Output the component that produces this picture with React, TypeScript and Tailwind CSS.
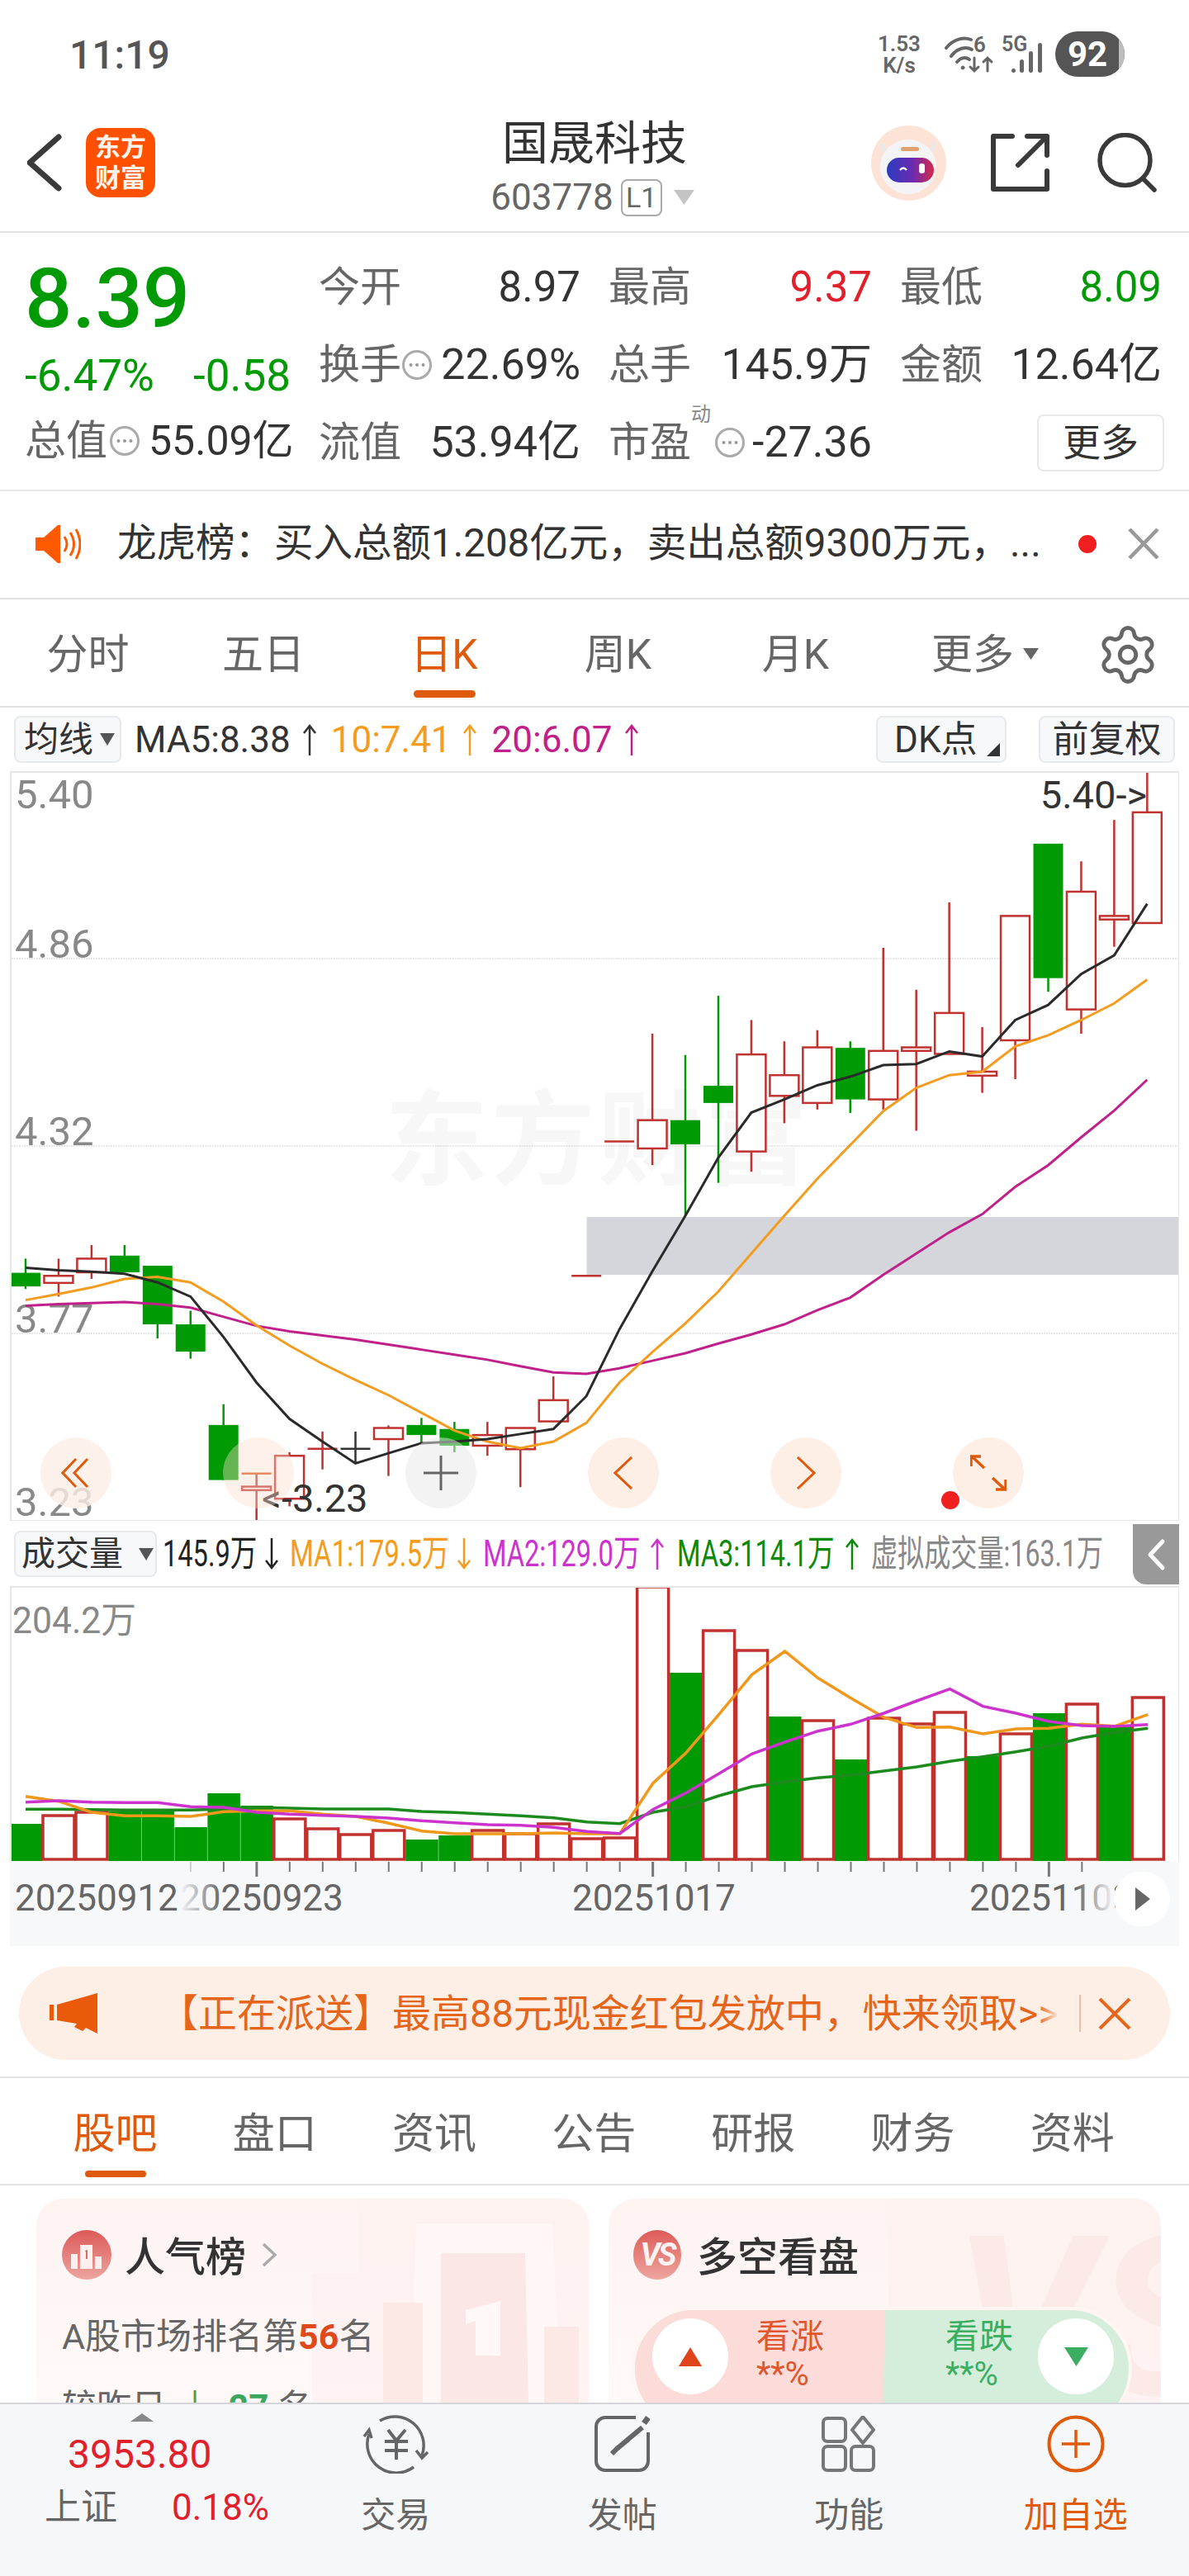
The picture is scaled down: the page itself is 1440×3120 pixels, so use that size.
import { Settings } from "lucide-react";

const RED = "#c0322f";
const GREEN = "#009a05";
const cx = (i: number) => 31 + 39.98 * i;
const ky = (z: number) => 900 + z * 0.6122;
const vy = (z: number) => 1860 + z / 3;

// [kind, wickTop, bodyTop, bodyBottom, wickBottom] in chart zoom units
type Candle = ["r" | "g" | "k", number, number, number, number];
const candles: Candle[] = [
  ["g", 1020, 1048, 1075, 1080],
  ["r", 1020, 1054, 1068, 1095],
  ["r", 993, 1020, 1047, 1060],
  ["g", 993, 1014, 1047, 1047],
  ["g", 1034, 1034, 1150, 1178],
  ["g", 1123, 1150, 1204, 1218],
  ["g", 1308, 1349, 1458, 1458],
  ["r", 1445, 1471, 1478, 1540],
  ["r", 1403, 1410, 1495, 1510],
  ["r", 1362, 1396, 1396, 1437],
  ["k", 1362, 1396, 1396, 1425],
  ["r", 1350, 1355, 1377, 1450],
  ["g", 1335, 1349, 1369, 1385],
  ["g", 1343, 1357, 1390, 1403],
  ["r", 1343, 1369, 1390, 1410],
  ["r", 1355, 1355, 1397, 1472],
  ["r", 1253, 1300, 1342, 1342],
  ["r", 1054, 1054, 1054, 1054],
  ["r", 788, 788, 788, 788],
  ["r", 575, 746, 802, 835],
  ["g", 617, 746, 794, 935],
  ["g", 500, 678, 712, 870],
  ["r", 548, 616, 808, 848],
  ["r", 590, 657, 698, 752],
  ["r", 568, 602, 712, 725],
  ["g", 590, 603, 705, 732],
  ["r", 405, 609, 705, 725],
  ["r", 488, 602, 609, 767],
  ["r", 315, 534, 615, 615],
  ["r", 562, 650, 658, 692],
  ["r", 342, 342, 588, 665],
  ["g", 199, 199, 465, 492],
  ["r", 234, 294, 527, 575],
  ["r", 152, 342, 349, 403],
  ["r", 56, 137, 356, 356],
];

const ma5 = [1038, 1043, 1046, 1050, 1067, 1095, 1175, 1265, 1337, 1382, 1425, 1405, 1385, 1382, 1377, 1367, 1357, 1292, 1160, 1045, 935, 820, 731, 705, 677, 660, 637, 635, 610, 620, 548, 518, 457, 420, 318];
const ma10 = [1102, 1090, 1077, 1060, 1056, 1067, 1105, 1152, 1192, 1228, 1260, 1290, 1325, 1360, 1382, 1395, 1382, 1345, 1265, 1205, 1148, 1085, 1010, 935, 862, 795, 728, 682, 657, 650, 600, 578, 548, 515, 468];
const ma20 = [1113, 1110, 1108, 1106, 1110, 1117, 1135, 1153, 1164, 1172, 1180, 1190, 1200, 1210, 1220, 1233, 1245, 1248, 1237, 1222, 1207, 1188, 1170, 1150, 1122, 1097, 1052, 1010, 968, 932, 878, 835, 780, 727, 666];

const volBars: ["r" | "g", number][] = [
  ["g", 2209], ["r", 2199], ["r", 2195], ["g", 2194], ["g", 2191], ["g", 2213], ["g", 2172], ["g", 2187], ["r", 2203],
  ["r", 2215], ["r", 2222], ["r", 2217], ["g", 2228], ["g", 2223], ["r", 2217], ["r", 2221], ["r", 2209], ["r", 2227],
  ["r", 2226], ["r", 1922], ["g", 2026], ["r", 1975], ["r", 1999], ["g", 2079], ["r", 2084], ["g", 2131], ["r", 2081],
  ["r", 2088], ["r", 2074], ["g", 2127], ["r", 2100], ["g", 2075], ["r", 2064], ["g", 2089], ["r", 2056],
];
const vol1 = [947, 965, 1005, 1018, 1018, 1020, 1003, 1000, 1000, 1012, 1020, 1045, 1073, 1083, 1083, 1083, 1080, 1083, 1083, 900, 790, 650, 505, 420, 517, 590, 660, 697, 695, 720, 702, 700, 685, 692, 650];
const vol2 = [968, 963, 968, 970, 970, 985, 987, 1005, 1012, 1016, 1020, 1026, 1036, 1043, 1050, 1052, 1060, 1075, 1082, 995, 935, 865, 793, 750, 710, 685, 645, 600, 557, 620, 645, 675, 690, 693, 686];
const vol3 = [994, 994, 995, 997, 997, 997, 993, 987, 990, 993, 993, 993, 1002, 1006, 1012, 1018, 1025, 1040, 1046, 1005, 985, 945, 912, 895, 880, 870, 855, 840, 820, 803, 785, 765, 735, 715, 700];

const pts = (vals: number[], f: (z: number) => number) => vals.map((z, i) => `${cx(i)},${f(z)}`).join(" ");

function StatusBar() {
  return (
    <div className="flex h-[131px] shrink-0 items-center justify-between pl-[84px] pr-[78px]">
      <span className="pt-[2px] text-[48px] font-medium leading-none text-[#555]">11:19</span>
      <div className="flex items-center">
        <div className="flex w-[60px] flex-col items-center text-[26px] font-semibold leading-[26px] text-[#666]">
          <span>1.53</span>
          <span>K/s</span>
        </div>
        <svg width="60" height="56" viewBox="0 0 60 56" className="ml-[25px]" fill="none" stroke="#666" strokeLinecap="round">
          <path d="M2 20 C 12 8, 24 7, 32 10" strokeWidth="4" />
          <path d="M8 30 C 15 20, 26 18, 33 22" strokeWidth="4" />
          <path d="M15 37 C 20 31, 26 31, 30 34" strokeWidth="4" />
          <circle cx="22" cy="44" r="2" fill="#666" strokeWidth="1" />
          <text x="35" y="25" fill="#666" stroke="none" fontSize="26" fontWeight="600">6</text>
          <path d="M36 32 V48 M31 43 L36 48 L41 43 M52 48 V32 M47 37 L52 32 L57 37" strokeWidth="3" />
        </svg>
        <svg width="54" height="48" viewBox="0 0 54 48" className="ml-[9px]" fill="#666">
          <text x="0" y="20" fontSize="25" fontWeight="600">5G</text>
          <rect x="12" y="41" width="5" height="5" rx="2.5" />
          <rect x="22" y="30" width="5" height="16" rx="2.5" />
          <rect x="33" y="20" width="5" height="26" rx="2.5" />
          <rect x="44" y="10" width="5" height="36" rx="2.5" />
        </svg>
        <div className="relative ml-[11px] flex h-[55px] w-[84px] items-center justify-center overflow-hidden rounded-full bg-[#555]">
          <span className="pr-[6px] text-[42px] font-bold leading-none text-white">92</span>
          <div className="absolute bottom-0 right-0 top-0 w-[7px] bg-[#bdbdbd]" />
        </div>
      </div>
    </div>
  );
}

function Avatar() {
  return (
    <svg width="93" height="91" viewBox="0 0 93 91" className="mt-[21px]">
      <defs>
        <linearGradient id="visor" x1="0" x2="1">
          <stop offset="0" stopColor="#2a3cc0" />
          <stop offset="0.55" stopColor="#6a2bb0" />
          <stop offset="1" stopColor="#d8284a" />
        </linearGradient>
      </defs>
      <circle cx="46.5" cy="45.5" r="45.5" fill="#fde3d6" />
      <path d="M14 22 q2 10 10 12 M78 20 q-2 10 -10 14" stroke="#e8e8e8" strokeWidth="5" fill="none" />
      <ellipse cx="46" cy="50" rx="34" ry="33" fill="#f4f4f6" />
      <rect x="37" y="26" width="22" height="5" rx="2.5" fill="#e0a070" />
      <rect x="20" y="39" width="57" height="30" rx="15" fill="url(#visor)" />
      <path d="M36 54 q4 -5 8 0" stroke="#fff" strokeWidth="2.5" fill="none" />
      <rect x="59" y="46" width="7" height="12" rx="3" fill="#fff" />
    </svg>
  );
}

function Header() {
  return (
    <div className="grid h-[151px] shrink-0 grid-cols-3 border-b-2 border-[#e2e2e2]">
      <div className="flex items-start pl-[33px]">
        <svg width="42" height="70" viewBox="0 0 42 70" fill="none" stroke="#3a3a3a" strokeWidth="7" strokeLinecap="round" strokeLinejoin="round" className="mt-[31px]">
          <path d="M38 4 L3 35 L38 66" />
        </svg>
        <div className="ml-[29px] mt-[24px] flex h-[84px] w-[84px] flex-col items-center justify-center rounded-[18px] bg-[#ff5000] text-[31px] font-bold leading-[37px] text-[#fff3ea]">
          <span>东方</span>
          <span>财富</span>
        </div>
      </div>
      <div className="flex flex-col items-center pt-[15px]">
        <span className="text-[56px] leading-[56px] text-[#333]">国晟科技</span>
        <div className="mr-[5px] mt-[13px] flex items-center text-[44px] leading-[48px] text-[#666]">
          <span>603778</span>
          <span className="ml-[9px] flex h-[45px] w-[50px] items-center justify-center rounded-[8px] border-2 border-[#aaa] text-[34px] leading-none">L1</span>
          <svg width="25" height="18" viewBox="0 0 25 18" className="ml-[14px]" fill="#c4c4c4">
            <path d="M0 0 H25 L12.5 18 Z" />
          </svg>
        </div>
      </div>
      <div className="flex items-start justify-end pr-[39px]">
        <Avatar />
        <svg width="71" height="70" viewBox="0 0 71 70" fill="none" stroke="#3a3a3a" strokeWidth="6" strokeLinecap="round" strokeLinejoin="round" className="ml-[53px] mt-[31px]">
          <path d="M26 3 H3 V67 H68 V45 M44 3 H68 V26 M68 3 L33 38" />
        </svg>
        <svg width="72" height="72" viewBox="0 0 72 72" fill="none" stroke="#3a3a3a" strokeWidth="5.5" strokeLinecap="round" className="ml-[58px] mt-[30px]">
          <circle cx="33.5" cy="33" r="30.5" />
          <path d="M56 56 L69 69" />
        </svg>
      </div>
    </div>
  );
}

function Dots() {
  return (
    <svg width="38" height="38" viewBox="0 0 38 38" className="shrink-0" fill="none">
      <circle cx="19" cy="19" r="16.5" stroke="#aaa" strokeWidth="3" />
      <circle cx="11.5" cy="19" r="2" fill="#999" />
      <circle cx="19" cy="19" r="2" fill="#999" />
      <circle cx="26.5" cy="19" r="2" fill="#999" />
    </svg>
  );
}

function QuotePanel() {
  const label = "text-[50px] text-[#666]";
  return (
    <div className="flex h-[313px] shrink-0 border-b-2 border-[#e8e8e8] text-[51px] text-[#333]">
      <div className="w-[386px] shrink-0 pl-[30px] pt-[22px]">
        <div className="h-[116px] text-[101px] font-medium leading-[116px] text-[#009a05]">8.39</div>
        <div className="flex h-[72px] items-center text-[53px] text-[#009a05]">
          <span className="w-[204px]">-6.47%</span>
          <span>-0.58</span>
        </div>
        <div className="flex h-[84px] items-center">
          <span className={label}>总值</span>
          <span className="ml-[2px]"><Dots /></span>
          <span className="ml-[10px] text-[50px]">55.09亿</span>
        </div>
      </div>
      <div className="grid grid-cols-[317px_319px_317px] grid-rows-[94px_94px_94px] gap-x-[34px] pt-[19px]">
        <div className="flex items-center justify-between"><span className={label}>今开</span><span>8.97</span></div>
        <div className="flex items-center justify-between"><span className={label}>最高</span><span className="text-[#e0202a]">9.37</span></div>
        <div className="flex items-center justify-between"><span className={label}>最低</span><span className="text-[#009a05]">8.09</span></div>
        <div className="flex items-center">
          <span className={label}>换手</span>
          <span><Dots /></span>
          <span className="ml-auto text-[52px]">22.69%</span>
        </div>
        <div className="flex items-center justify-between"><span className={label}>总手</span><span className="text-[52px]">145.9万</span></div>
        <div className="flex items-center justify-between"><span className={label}>金额</span><span className="text-[52px]">12.64亿</span></div>
        <div className="flex items-center justify-between"><span className={label}>流值</span><span className="text-[52px]">53.94亿</span></div>
        <div className="relative flex items-center">
          <span className={label}>市盈</span>
          <span className="absolute left-[100px] top-[1px] text-[24px] leading-none text-[#888]">动</span>
          <span className="ml-[28px]"><Dots /></span>
          <span className="ml-auto text-[52px]">-27.36</span>
        </div>
        <div className="flex items-center justify-end">
          <span className="mr-[-3px] flex h-[69px] w-[154px] items-center justify-center rounded-[8px] border-2 border-[#e8e8e8] text-[46px]">更多</span>
        </div>
      </div>
    </div>
  );
}

function Notice() {
  return (
    <div className="flex h-[131px] shrink-0 items-center border-b-2 border-[#e2e2e2] pb-[2px] pl-[43px]">
      <svg width="55" height="46" viewBox="0 0 55 46" fill="#ff5a00">
        <path d="M0 15 H10 L27 0 H30 V46 H27 L10 31 H0 Z" />
        <path d="M35 14 q6 9 0 18 M42 9 q9 14 0 28 M49 5 q10 18 0 36" fill="none" stroke="#ff5a00" strokeWidth="3" />
      </svg>
      <span className="ml-[44px] w-[1125px] whitespace-nowrap text-[47.5px] leading-none text-[#333]">龙虎榜：买入总额1.208亿元，卖出总额9300万元，...</span>
      <span className="ml-[39px] h-[22px] w-[22px] rounded-full bg-[#f02020]" />
      <svg width="38" height="37" viewBox="0 0 38 37" className="ml-[38px]" fill="none" stroke="#999" strokeWidth="4.5">
        <path d="M2 1 L36 36 M36 1 L2 36" />
      </svg>
    </div>
  );
}

const chartTabs = [
  { name: "分时", w: "w-[213px]" },
  { name: "五日", w: "w-[212px]" },
  { name: "日K", w: "w-[226px]", active: true },
  { name: "周K", w: "w-[195px]" },
  { name: "月K", w: "w-[235px]" },
];

function ChartTabs() {
  return (
    <div className="relative flex h-[131px] shrink-0 border-b-2 border-[#e2e2e2]">
      {chartTabs.map((t) => (
        <div key={t.name} className={`flex flex-col items-center pt-[38px] ${t.w}`}>
          <span className={`text-[50px] leading-[58px] ${t.active ? "text-[#e05a0c]" : "text-[#666]"}`}>{t.name}</span>
          {t.active && <span className="mt-[14px] h-[9px] w-[75px] rounded-full bg-[#e05a0c]" />}
        </div>
      ))}
      <div className="flex items-start pl-[47px] pt-[38px]">
        <span className="text-[50px] leading-[58px] text-[#666]">更多</span>
        <svg width="19" height="14" viewBox="0 0 19 14" className="ml-[11px] mt-[21px]" fill="#666">
          <path d="M0 0 H19 L9.5 14 Z" />
        </svg>
      </div>
      <Settings size={78} strokeWidth={1.5} color="#666" className="ml-[69px] mt-[28px]" />
    </div>
  );
}

function Arrow({ color, down }: { color: string; down?: boolean }) {
  return (
    <svg width="18" height="38" viewBox="0 0 18 38" className={`shrink-0 ${down ? "rotate-180" : ""}`} fill="none" stroke={color} strokeWidth="2.5">
      <path d="M9 38 V2 M2 11 L9 2 L16 11" />
    </svg>
  );
}

function KToolbar() {
  return (
    <div className="flex h-[77px] shrink-0 items-center pl-[17px] pr-[17px] text-[44px] leading-none">
      <div className="flex h-[57px] w-[130px] items-center rounded-[8px] border-2 border-[#e8e9ec] bg-[#f7f8fa] pl-[10px] text-[42px] text-[#333]">
        <span>均线</span>
        <svg width="18" height="15" viewBox="0 0 18 15" className="ml-[8px]" fill="#555"><path d="M0 0 H18 L9 15 Z" /></svg>
      </div>
      <span className="ml-[16px] text-[#333]">MA5:8.38</span>
      <span className="ml-[14px]"><Arrow color="#333" /></span>
      <span className="ml-[17px] text-[#f39c1f]">10:7.41</span>
      <span className="ml-[13px]"><Arrow color="#f39c1f" /></span>
      <span className="ml-[18px] text-[#c0208a]">20:6.07</span>
      <span className="ml-[14px]"><Arrow color="#c0208a" /></span>
      <div className="relative ml-auto flex h-[57px] w-[158px] items-center rounded-[8px] border-2 border-[#e8e9ec] bg-[#f7f8fa] pl-[20px] text-[#333]">
        <span>DK点</span>
        <svg width="16" height="16" viewBox="0 0 16 16" className="absolute bottom-[6px] right-[6px]" fill="#333"><path d="M16 0 V16 H0 Z" /></svg>
      </div>
      <div className="ml-[39px] flex h-[57px] w-[165px] items-center justify-center rounded-[8px] border-2 border-[#e8e9ec] bg-[#f7f8fa] text-[#333]">前复权</div>
    </div>
  );
}

function RoundButton({ children, pos }: { children?: React.ReactNode; pos: string }) {
  return <div className={`absolute top-[805px] flex h-[86px] w-[86px] items-center justify-center rounded-full ${pos}`}>{children}</div>;
}

function KChart() {
  return (
    <div className="relative mx-[12px] h-[908px] shrink-0 border-2 border-r border-b border-[#e6e6e6]">
      <span className="absolute left-[452px] top-[384px] whitespace-nowrap text-[125px] font-bold leading-none tracking-[4px] text-[#f7f7f7]">东方财富</span>
      <span className="absolute left-[4px] top-[2px] text-[49px] leading-[50px] text-[#888]">5.40</span>
      <span className="absolute left-[4px] top-[183px] text-[49px] leading-[50px] text-[#888]">4.86</span>
      <span className="absolute left-[4px] top-[410px] text-[49px] leading-[50px] text-[#888]">4.32</span>
      <span className="absolute left-[4px] top-[637px] text-[49px] leading-[50px] text-[#888]">3.77</span>
      <span className="absolute left-[4px] top-[863px] text-[49px] leading-[42px] text-[#888]">3.23</span>
      <svg className="absolute inset-0 h-full w-full" viewBox="14 936 1414 905" preserveAspectRatio="none" fill="none">
        {[1161, 1388, 1615].map((y) => (
          <path key={y} d={`M14 ${y} H1428`} stroke="#cfcfcf" strokeWidth="1" strokeDasharray="2 1" />
        ))}
        <rect x="711" y="1474" width="717" height="70" fill="#d4d6db" />
        {candles.map(([kind, wt, bt, bb, wb], i) => {
          const x = cx(i);
          const color = kind === "g" ? GREEN : kind === "k" ? "#333" : RED;
          const h = ky(bb) - ky(bt);
          return (
            <g key={i}>
              {wb > wt && <path d={`M${x} ${ky(wt)} V${ky(wb)}`} stroke={color} strokeWidth="2.5" />}
              {h === 0 ? (
                <path d={`M${x - 18} ${ky(bt)} H${x + 18}`} stroke={color} strokeWidth="2.5" />
              ) : kind === "g" ? (
                <rect x={x - 18} y={ky(bt)} width="36" height={h} fill={GREEN} />
              ) : (
                <rect x={x - 17.5} y={ky(bt)} width="35" height={h} fill="#fff" stroke={RED} strokeWidth="2.5" />
              )}
            </g>
          );
        })}
        <path d={`M${cx(7) - 18} ${ky(1445)} H${cx(7) + 18}`} stroke="#e0541a" strokeWidth="2.5" />
        <polyline points={pts(ma20, ky)} stroke="#c0208a" strokeWidth="3" />
        <polyline points={pts(ma10, ky)} stroke="#f39c1f" strokeWidth="3" />
        <polyline points={pts(ma5, ky)} stroke="#2a2a2a" strokeWidth="3" />
      </svg>
      <span className="absolute left-[303px] top-[856px] text-[47px] leading-[46px] text-[#333]">&lt;-3.23</span>
      <span className="absolute right-[38px] top-[2px] text-[47px] leading-[50px] text-[#333]">5.40-&gt;</span>
      <RoundButton pos="left-[35px] bg-[#fdeee6]/80">
        <svg width="38" height="38" viewBox="0 0 38 38" fill="none" stroke="#e05a0c" strokeWidth="3"><path d="M19 2 L3 19 L19 36 M33 2 L17 19 L33 36" /></svg>
      </RoundButton>
      <RoundButton pos="left-[256px] bg-[#fbdccb]/40" />
      <RoundButton pos="left-[477px] bg-[#e8e8e8]/50">
        <svg width="42" height="42" viewBox="0 0 42 42" fill="none" stroke="#666" strokeWidth="3"><path d="M21 0 V42 M0 21 H42" /></svg>
      </RoundButton>
      <RoundButton pos="left-[698px] bg-[#fdeee6]">
        <svg width="24" height="40" viewBox="0 0 24 40" fill="none" stroke="#e05a0c" strokeWidth="3"><path d="M22 1 L2 20 L22 39" /></svg>
      </RoundButton>
      <RoundButton pos="left-[919px] bg-[#fdeee6]">
        <svg width="24" height="40" viewBox="0 0 24 40" fill="none" stroke="#e05a0c" strokeWidth="3"><path d="M2 1 L22 20 L2 39" /></svg>
      </RoundButton>
      <RoundButton pos="left-[1140px] bg-[#fdeee6]">
        <svg width="44" height="44" viewBox="0 0 44 44" fill="none" stroke="#e05a0c" strokeWidth="3.5"><path d="M1 14 V2 H13 M2 2 L17 16 M43 30 V42 H31 M42 42 L27 28" /></svg>
      </RoundButton>
      <span className="absolute left-[1126px] top-[870px] h-[22px] w-[22px] rounded-full bg-[#f02020]" />
    </div>
  );
}

function VolumeHeader() {
  return (
    <div className="relative flex h-[79px] shrink-0 items-start pl-[17px] pt-[12px] text-[44px] leading-[56px]">
      <div className="flex h-[56px] w-[181px] items-center rounded-[8px] border-2 border-[#e8e9ec] bg-[#f7f8fa] pl-[7px] text-[41px] text-[#333]">
        <span>成交量</span>
        <svg width="18" height="15" viewBox="0 0 18 15" className="ml-[19px]" fill="#555"><path d="M0 0 H18 L9 15 Z" /></svg>
      </div>
      <span className="ml-[7px] w-[123px] origin-left scale-x-[0.74] whitespace-nowrap text-[#222]">145.9万</span>
      <span className="mt-[9px] w-[33px]"><Arrow color="#222" down /></span>
      <span className="w-[202px] origin-left scale-x-[0.75] whitespace-nowrap text-[#f39c1f]">MA1:179.5万</span>
      <span className="mt-[9px] w-[34px]"><Arrow color="#f39c1f" down /></span>
      <span className="w-[202px] origin-left scale-x-[0.74] whitespace-nowrap text-[#cc33cc]">MA2:129.0万</span>
      <span className="mt-[9px] w-[34px]"><Arrow color="#cc33cc" /></span>
      <span className="w-[203px] origin-left scale-x-[0.74] whitespace-nowrap text-[#0a8a0a]">MA3:114.1万</span>
      <span className="mt-[9px] w-[34px]"><Arrow color="#0a8a0a" /></span>
      <span className="origin-left scale-x-[0.73] whitespace-nowrap text-[#888]">虚拟成交量:163.1万</span>
      <div className="absolute right-[12px] top-[4px] flex h-[73px] w-[56px] items-center justify-center rounded-bl-[16px] bg-[#999]">
        <svg width="24" height="40" viewBox="0 0 24 40" fill="none" stroke="#fff" strokeWidth="5" strokeLinecap="round" strokeLinejoin="round"><path d="M20 4 L5 20 L20 36" /></svg>
      </div>
    </div>
  );
}

function VolumeChart() {
  return (
    <div className="relative mx-[12px] h-[333px] shrink-0 border-t-2 border-l-2 border-r border-[#e6e6e6]">
      <span className="absolute left-[1px] top-[15px] origin-left scale-x-[0.97] text-[44px] leading-[50px] text-[#888]">204.2万</span>
      <svg className="absolute inset-0 h-full w-full" viewBox="14 1923 1413 331" preserveAspectRatio="none" fill="none">
        {volBars.map(([kind, top], i) =>
          kind === "g" ? (
            <rect key={i} x={cx(i) - 19.5} y={top} width="39.5" height={2254 - top} fill={GREEN} />
          ) : (
            <rect key={i} x={cx(i) - 19} y={top} width="38" height={2252 - top} fill="#fff" stroke={RED} strokeWidth="3.5" />
          )
        )}
        <polyline points={pts(vol3, vy)} stroke="#1d8a1d" strokeWidth="3.5" />
        <polyline points={pts(vol1, vy)} stroke="#f0981c" strokeWidth="3.5" />
        <polyline points={pts(vol2, vy)} stroke="#cc33cc" strokeWidth="3.5" />
      </svg>
    </div>
  );
}

const ticks = [5, 6, 7, 8, 9, 10, 11, 12, 13, 14, 15, 16, 17, 18, 19, 20, 21, 22, 23, 24, 25, 26, 27, 28, 29, 30, 31, 32];

function DateAxis() {
  return (
    <div className="relative mx-[12px] h-[103px] shrink-0 bg-[#f7f8fa] text-[44px] leading-[48px] text-[#666]">
      <svg className="absolute left-0 top-0" width="1416" height="24" viewBox="12 2254 1416 24" fill="none" stroke="#777" strokeWidth="2">
        {ticks.map((i) => {
          const major = i === 7 || i === 19 || i === 31;
          return <path key={i} d={`M${cx(i)} 2255 V${major ? 2273 : 2267}`} strokeWidth={major ? 3 : 2} stroke={i === 5 ? "#ccc" : "#777"} />;
        })}
      </svg>
      <span className="absolute left-[6px] top-[21px]">20250912</span>
      <span className="absolute left-[206px] top-[21px]">20250923</span>
      <div className="absolute left-[206px] top-[21px] h-[48px] w-[50px] bg-gradient-to-r from-[#f7f8fa] to-transparent" />
      <span className="absolute left-[681px] top-[21px]">20251017</span>
      <span className="absolute left-[1162px] top-[21px]">20251103</span>
      <div className="absolute left-[1290px] top-[21px] h-[48px] w-[48px] bg-gradient-to-r from-transparent to-[#f7f8fa]" />
      <div className="absolute left-[1337px] top-[13px] flex h-[66px] w-[68px] items-center justify-center rounded-full bg-white">
        <svg width="18" height="28" viewBox="0 0 18 28" fill="#666" className="ml-[2px]"><path d="M0 0 L18 14 L0 28 Z" /></svg>
      </div>
    </div>
  );
}

function PromoBanner() {
  return (
    <div className="h-[160px] shrink-0 border-b-2 border-[#e2e2e2] px-[23px] pt-[25px]">
      <div className="flex h-[113px] items-center rounded-full bg-[#fdeee6] pl-[37px]">
        <svg width="58" height="49" viewBox="0 0 58 49" fill="#ea5a0a">
          <path d="M0 14 H5 V33 H0 Z M9 14 L58 0 V49 L44 42 L40 46 L30 41 L33 37 L9 33 Z" />
        </svg>
        <div className="relative ml-[75px] w-[1092px] whitespace-nowrap text-[47px] leading-none text-[#e5651a]">
          <span>【正在派送】最高88元现金红包发放中，快来领取&gt;&gt;</span>
          <div className="absolute bottom-0 right-[2px] top-0 w-[26px] bg-gradient-to-r from-transparent to-[#fdeee6]" />
        </div>
        <span className="ml-[22px] h-[45px] w-[2px] bg-[#e9bfa8]" />
        <svg width="40" height="38" viewBox="0 0 40 38" className="ml-[21px]" fill="none" stroke="#e5651a" strokeWidth="4">
          <path d="M2 1 L38 37 M38 1 L2 37" />
        </svg>
      </div>
    </div>
  );
}

const newsTabs = ["股吧", "盘口", "资讯", "公告", "研报", "财务", "资料"];

function NewsTabs() {
  return (
    <div className="grid h-[130px] shrink-0 grid-cols-[repeat(7,193.2px)] border-b-2 border-[#e2e2e2] pl-[43px]">
      {newsTabs.map((t, i) => (
        <div key={t} className="flex flex-col items-center pt-[39px]">
          <span className={`text-[51px] leading-[58px] ${i === 0 ? "text-[#e05a0c]" : "text-[#666]"}`}>{t}</span>
          {i === 0 && <span className="mt-[15px] h-[8px] w-[74px] rounded-full bg-[#e05a0c]" />}
        </div>
      ))}
    </div>
  );
}

function Cards() {
  return (
    <div className="flex min-h-0 flex-1 gap-[24px] overflow-hidden px-[44px] pt-[16px]">
      <div className="relative h-[330px] w-[669px] shrink-0 overflow-hidden rounded-[32px] bg-gradient-to-b from-[#fdf4f2] to-[#fffafa] pl-[31px] pt-[38px]">
        <svg className="absolute inset-0" width="669" height="330" viewBox="0 0 669 330">
          <path d="M391 0 H669 V330 H334 V90 H391 Z" fill="#fdf0ee" opacity="0.6" />
          <path d="M460 30 H625 L640 330 H450 Z" fill="#fff7f6" />
          <path d="M420 126 H468 V330 H420 Z" fill="#fce9e6" />
          <path d="M490 66 H592 L598 330 H490 Z" fill="#fbe8e6" />
          <path d="M615 155 H657 V330 H615 Z" fill="#fce9e6" />
          <path d="M520 135 L562 124 V190 H532 V148 L520 152 Z" fill="#fff8f7" />
        </svg>
        <div className="relative flex h-[60px] items-center">
          <svg width="60" height="60" viewBox="0 0 60 60">
            <defs>
              <linearGradient id="badgeA" x1="0" x2="0" y1="0" y2="1"><stop offset="0" stopColor="#dc5a58" /><stop offset="1" stopColor="#eda5a0" /></linearGradient>
            </defs>
            <circle cx="30" cy="30" r="30" fill="url(#badgeA)" />
            <path d="M11 29 H19 V47 H11 Z M22 18 H37 V47 H22 Z M40 32 H48 V47 H40 Z" fill="#fdf0ee" />
            <path d="M28 25 L31 24 V35 H29 V27 Z" fill="#d86a66" />
          </svg>
          <span className="ml-[16px] pt-[6px] text-[49px] font-medium leading-none text-[#333]">人气榜</span>
          <svg width="18" height="28" viewBox="0 0 18 28" className="ml-[19px]" fill="none" stroke="#aaa" strokeWidth="3.5"><path d="M2 1 L16 14 L2 27" /></svg>
        </div>
        <div className="relative mt-[48px] whitespace-nowrap text-[43px] leading-[42px] text-[#666]">
          A股市场排名第<span className="font-bold text-[#e04a1a]">56</span>名
        </div>
        <div className="relative mt-[43px] flex items-center whitespace-nowrap text-[42px] leading-[44px] text-[#666]">
          较昨日
          <span className="ml-[14px] text-[#3aa65e]">↓</span>
          <span className="ml-[20px] font-bold text-[#3aa65e]">27</span>
          <span className="ml-[11px]">名</span>
        </div>
      </div>
      <div className="relative h-[330px] w-[669px] shrink-0 overflow-hidden rounded-[32px] bg-gradient-to-b from-[#fdf4f2] to-[#fffafa] pl-[30px] pt-[38px]">
        <div className="absolute bottom-0 right-0 top-0 w-[330px] bg-[#fdf1ef]/70" />
        <span className="absolute left-[418px] top-[10px] text-[270px] font-bold italic leading-none text-[#fbeae8]">VS</span>
        <div className="relative flex h-[60px] items-center">
          <div className="flex h-[60px] w-[58px] items-center justify-center rounded-full bg-gradient-to-b from-[#dc5a58] to-[#eda5a0] text-[38px] font-bold italic leading-none tracking-[-3px] text-[#fff3f1]">VS</div>
          <span className="ml-[19px] pt-[6px] text-[49px] font-medium leading-none text-[#333]">多空看盘</span>
        </div>
        <div className="relative ml-[-2px] mt-[33px] flex h-[150px] w-[606px] rounded-[75px] border-4 border-[#fff5f3] bg-[#d5eedb]">
          <div className="relative h-full w-[303px] rounded-l-[75px] bg-[#fcdcd9] [clip-path:polygon(0_0,100%_0,99%_100%,0_100%)] pl-[147px] pt-[12px] text-[41px] leading-[40px] text-[#e0562e]">
            <div>看涨</div>
            <div className="mt-[8px] text-[40px] leading-[36px]">**%</div>
            <div className="absolute left-[21px] top-[10px] flex h-[92px] w-[92px] items-center justify-center rounded-full bg-white">
              <svg width="28" height="23" viewBox="0 0 28 23" fill="#e0441a"><path d="M14 0 L28 23 H0 Z" /></svg>
            </div>
          </div>
          <div className="relative flex-1 pl-[73px] pt-[12px] text-[41px] leading-[40px] text-[#3cae61]">
            <div>看跌</div>
            <div className="mt-[8px] text-[40px] leading-[36px]">**%</div>
            <div className="absolute right-[18px] top-[10px] flex h-[92px] w-[92px] items-center justify-center rounded-full bg-white">
              <svg width="29" height="23" viewBox="0 0 29 23" fill="#3cae61"><path d="M0 0 H29 L14.5 23 Z" /></svg>
            </div>
          </div>
        </div>
      </div>
    </div>
  );
}

function BottomNav() {
  return (
    <div className="flex h-[210px] shrink-0 border-t-2 border-[#d4d6da] bg-[#f6f7f9]">
      <div className="relative w-[342px] shrink-0">
        <svg width="28" height="10" viewBox="0 0 28 10" className="absolute left-[158px] top-[11px]" fill="#888"><path d="M14 0 L28 10 H0 Z" /></svg>
        <span className="absolute left-[82px] top-[36px] text-[48px] leading-[50px] text-[#e0202a]">3953.80</span>
        <span className="absolute left-[54px] top-[101px] text-[44px] leading-[48px] text-[#666]">上证</span>
        <span className="absolute left-[208px] top-[101px] text-[44px] leading-[48px] text-[#e0202a]">0.18%</span>
      </div>
      {[
        {
          label: "交易",
          icon: (
            <svg width="81" height="72" viewBox="0 0 81 72" fill="none" stroke="#666" strokeWidth="3.5">
              <path d="M21 8 A35 35 0 0 1 72 50 M62 64 A35 35 0 0 1 8 24" />
              <path d="M65 44 L72 53 L79 46 M2 27 L8 19 L11 29" />
              <path d="M31 19 L41 32 L52 19 M41 32 V55 M27 33 H55 M27 44 H55" strokeWidth="4" />
            </svg>
          ),
        },
        {
          label: "发帖",
          icon: (
            <svg width="67" height="68" viewBox="0 0 67 68" fill="none" stroke="#666" strokeWidth="4">
              <path d="M50 2 H13 A11 11 0 0 0 2 13 V55 A11 11 0 0 0 13 66 H54 A11 11 0 0 0 65 55 V20" />
              <path d="M58 14 L27 40 L21 46" strokeWidth="6" />
              <path d="M60 9 L65 2" strokeWidth="7" />
            </svg>
          ),
        },
        {
          label: "功能",
          icon: (
            <svg width="66" height="68" viewBox="0 0 66 68" fill="none" stroke="#777" strokeWidth="4">
              <rect x="2" y="3" width="27" height="28" rx="5" />
              <path d="M50 1 L63 17 L50 33 L37 17 Z" strokeLinejoin="round" />
              <rect x="2" y="37" width="27" height="29" rx="5" />
              <rect x="36" y="37" width="27" height="29" rx="5" />
            </svg>
          ),
        },
        {
          label: "加自选",
          active: true,
          icon: (
            <svg width="70" height="70" viewBox="0 0 70 70" fill="none" stroke="#e05a0c" strokeWidth="4">
              <circle cx="35" cy="35" r="32.5" />
              <path d="M35 18 V52 M18 35 H52" strokeWidth="3.5" />
            </svg>
          ),
        },
      ].map((item) => (
        <div key={item.label} className="flex w-[275px] flex-col items-center pt-[12px]">
          <div className="flex h-[72px] items-center justify-center">{item.icon}</div>
          <span className={`mt-[27px] text-[42px] leading-[48px] ${item.active ? "text-[#e05a0c]" : "text-[#666]"}`}>{item.label}</span>
        </div>
      ))}
    </div>
  );
}

export default function App() {
  return (
    <div className="flex h-[3120px] w-[1440px] flex-col overflow-hidden bg-white font-['Roboto','Noto_Sans_CJK_SC',sans-serif]">
      <StatusBar />
      <Header />
      <QuotePanel />
      <Notice />
      <ChartTabs />
      <KToolbar />
      <KChart />
      <VolumeHeader />
      <VolumeChart />
      <DateAxis />
      <PromoBanner />
      <NewsTabs />
      <Cards />
      <BottomNav />
    </div>
  );
}
